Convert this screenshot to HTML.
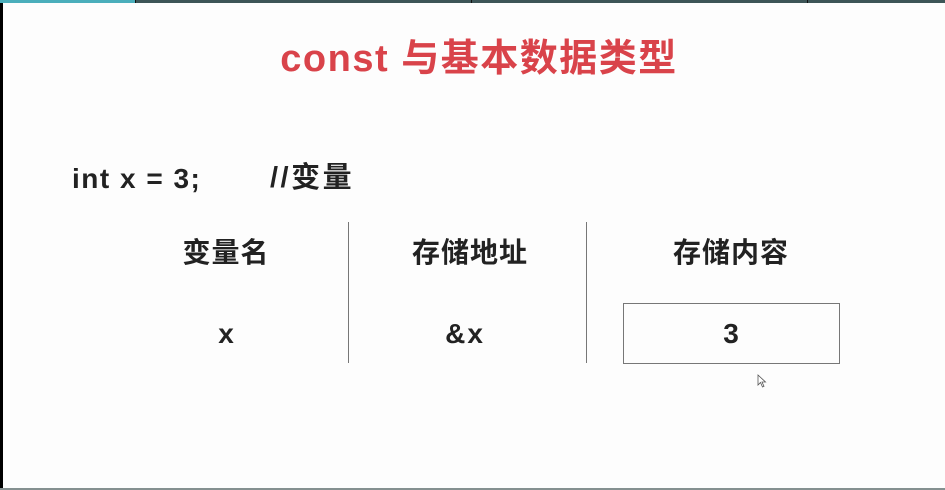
<!DOCTYPE html>
<html><head><meta charset="utf-8"><style>
body{margin:0;width:945px;height:490px;background:#fdfdfd;position:relative;overflow:hidden;font-family:"Liberation Sans","Noto Sans CJK SC",sans-serif;font-weight:bold;color:#222}
.a{position:absolute;white-space:nowrap}
.c{transform:translateX(-50%)}
</style></head><body>
<div class="a" style="left:0;top:0;width:945px;height:3px;background:#3d5557"></div>
<div class="a" style="left:0;top:0;width:135px;height:3px;background:#4aaebb"></div>
<div class="a" style="left:135px;top:0;width:1px;height:3px;background:#111"></div>
<div class="a" style="left:471px;top:0;width:1px;height:3px;background:#111"></div>
<div class="a" style="left:807px;top:0;width:1px;height:3px;background:#111"></div>
<div class="a" style="left:0;top:3px;width:3px;height:485px;background:#000"></div>
<div class="a" style="left:0;top:488px;width:945px;height:2px;background:#849090"></div>

<div class="a c" style="left:479px;top:35px;font-size:38px;line-height:48px;letter-spacing:1.5px;color:#d9434a">const 与基本数据类型</div>
<div class="a" style="left:72px;top:161px;font-size:28px;line-height:36px;letter-spacing:1.5px">int x = 3;</div>
<div class="a" style="left:270px;top:160px;font-size:29px;line-height:36px;letter-spacing:2.5px">//变量</div>

<div class="a c" style="left:226px;top:235px;font-size:28px;line-height:36px;letter-spacing:1px">变量名</div>
<div class="a c" style="left:470px;top:235px;font-size:28px;line-height:36px;letter-spacing:1px">存储地址</div>
<div class="a c" style="left:731px;top:235px;font-size:28px;line-height:36px;letter-spacing:1px">存储内容</div>

<div class="a" style="left:348px;top:222px;width:1px;height:141px;background:#777"></div>
<div class="a" style="left:586px;top:222px;width:1px;height:141px;background:#777"></div>

<div class="a c" style="left:226px;top:316px;font-size:28px;line-height:36px">x</div>
<div class="a c" style="left:465px;top:316px;font-size:28px;line-height:36px;letter-spacing:2px">&amp;x</div>
<div class="a" style="left:623px;top:303px;width:215px;height:59px;border:1px solid #777"></div>
<div class="a c" style="left:731px;top:316px;font-size:28px;line-height:36px">3</div>
<svg class="a" style="left:757px;top:374px" width="10" height="14" viewBox="0 0 10 14"><path d="M1 1 L1 11 L3.5 8.5 L5.5 13 L7 12.3 L5 8 L8.5 8 Z" fill="#fff" stroke="#555" stroke-width="0.8"/></svg>
</body></html>
